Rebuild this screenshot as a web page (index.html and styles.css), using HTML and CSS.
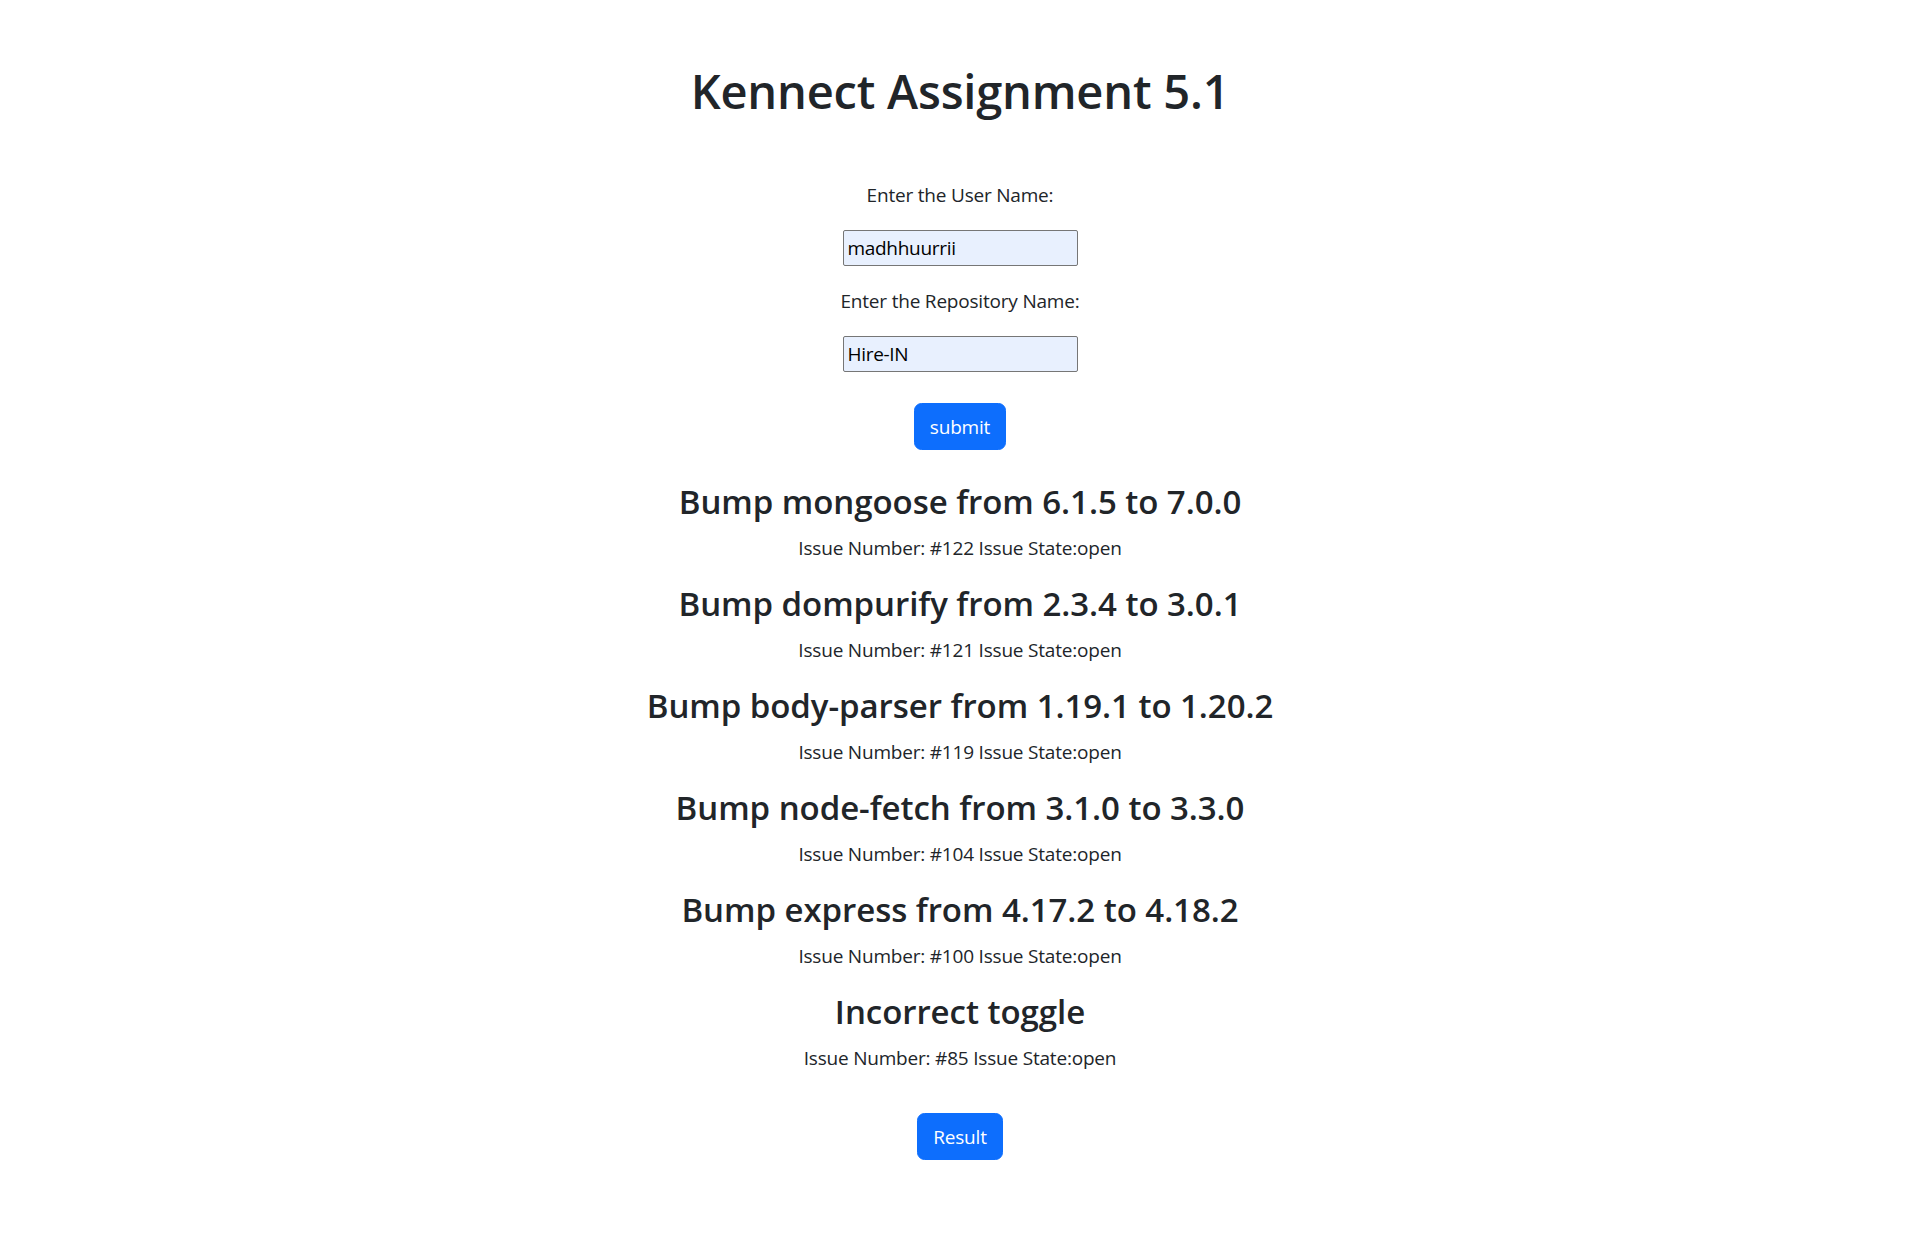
FILE: index.html
```html
<!DOCTYPE html>
<html lang="en">
<head>
<meta charset="utf-8">
<title>Kennect Assignment 5.1</title>
<link rel="stylesheet" href="styles.css">
</head>
<body>
<div class="app">
  <h1 class="title">Kennect Assignment 5.1</h1>
  <form class="search-form">
    <label class="field-label" for="user">Enter the User Name:</label>
    <input class="field-input" id="user" type="text" value="madhhuurrii">
    <label class="field-label" for="repo">Enter the Repository Name:</label>
    <input class="field-input" id="repo" type="text" value="Hire-IN">
    <button class="btn btn-submit" type="button">submit</button>
  </form>
  <div class="issues">
    <div class="issue">
      <h3 class="issue-title">Bump mongoose from 6.1.5 to 7.0.0</h3>
      <p class="issue-meta">Issue Number: #122 Issue State:open</p>
    </div>
    <div class="issue">
      <h3 class="issue-title">Bump dompurify from 2.3.4 to 3.0.1</h3>
      <p class="issue-meta">Issue Number: #121 Issue State:open</p>
    </div>
    <div class="issue">
      <h3 class="issue-title">Bump body-parser from 1.19.1 to 1.20.2</h3>
      <p class="issue-meta">Issue Number: #119 Issue State:open</p>
    </div>
    <div class="issue">
      <h3 class="issue-title">Bump node-fetch from 3.1.0 to 3.3.0</h3>
      <p class="issue-meta">Issue Number: #104 Issue State:open</p>
    </div>
    <div class="issue">
      <h3 class="issue-title">Bump express from 4.17.2 to 4.18.2</h3>
      <p class="issue-meta">Issue Number: #100 Issue State:open</p>
    </div>
    <div class="issue">
      <h3 class="issue-title">Incorrect toggle</h3>
      <p class="issue-meta">Issue Number: #85 Issue State:open</p>
    </div>
  </div>
  <div class="result-row">
    <button class="btn btn-result" type="button">Result</button>
  </div>
</div>
</body>
</html>
```
FILE: styles.css
```css
* { box-sizing: border-box; }
html, body { margin: 0; padding: 0; background: #fff; }
body {
  font-family: "Open Sans", "Noto Sans", sans-serif;
  font-size: 19px;
  line-height: 30px;
  letter-spacing: -0.2px;
  color: #212529;
}
.app {
  display: flex;
  flex-direction: column;
  align-items: center;
  text-align: center;
  padding-top: 61px;
}
.title {
  margin: 0 0 59px;
  font-size: 47px;
  line-height: 60px;
  font-weight: 600;
  letter-spacing: -0.2px;
}
.search-form {
  display: flex;
  flex-direction: column;
  align-items: center;
  margin: 0;
}
.field-label {
  display: block;
  line-height: 30px;
  margin-bottom: 20px;
}
.field-input {
  width: 235px;
  height: 36px;
  margin: 0 0 20px;
  padding: 1px 4px;
  border: 1px solid #767676;
  border-radius: 2px;
  background: #e8f0fe;
  color: #000;
  font-family: "Open Sans", "Noto Sans", sans-serif;
  font-size: 19px;
  letter-spacing: -0.3px;
}
.btn {
  font-family: "Open Sans", "Noto Sans", sans-serif;
  font-size: 19px;
  line-height: 30px;
  letter-spacing: -0.2px;
  padding: 7.5px 15px;
  border: 1px solid #0d6efd;
  border-radius: 7.5px;
  background: #0d6efd;
  color: #fff;
}
.btn-submit { margin-top: 11px; min-width: 92px; }
.btn-result { min-width: 86px; }
.issues {
  margin-top: 31px;
  display: flex;
  flex-direction: column;
  align-items: center;
}
.issue-title {
  margin: 0 0 10px;
  font-size: 33px;
  line-height: 42px;
  font-weight: 600;
  letter-spacing: -0.05px;
}
.issue-meta {
  margin: 0 0 20px;
  line-height: 30px;
}
.result-row { margin-top: 20px; }
```
